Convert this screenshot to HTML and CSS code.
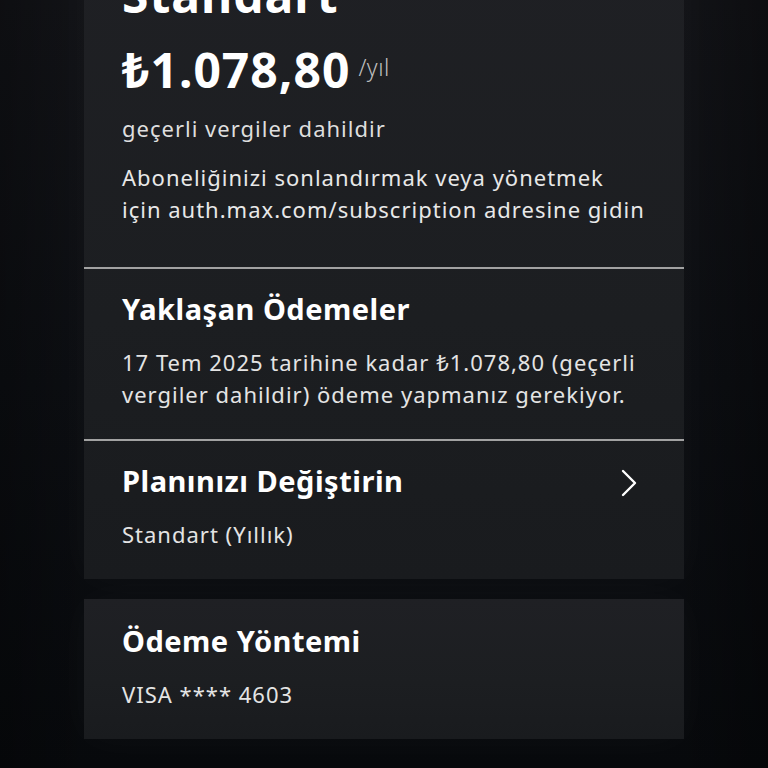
FILE: index.html
```html
<!DOCTYPE html>
<html lang="tr">
<head>
    <meta charset="UTF-8">
    <meta name="viewport" content="width=device-width, initial-scale=1.0">
    <title>Abonelik</title>
    <link rel="stylesheet" href="styles.css">
</head>
<body>
    <main class="page">
        <section class="card">
            <div class="card-section plan-summary">
                <h1 class="plan-name">Standart</h1>
                <div class="price">
                    <span class="price-amount">₺1.078,80</span>
                    <span class="price-period">/yıl</span>
                </div>
                <p class="tax-note">geçerli vergiler dahildir</p>
                <p class="manage-note">Aboneliğinizi sonlandırmak veya yönetmek<br>için auth.max.com/subscription adresine gidin</p>
            </div>
            <div class="card-section">
                <h2 class="section-title">Yaklaşan Ödemeler</h2>
                <p class="section-text">17 Tem 2025 tarihine kadar ₺1.078,80 (geçerli vergiler dahildir) ödeme yapmanız gerekiyor.</p>
            </div>
            <div class="card-section link-row">
                <div>
                    <h2 class="section-title">Planınızı Değiştirin</h2>
                    <p class="section-text">Standart (Yıllık)</p>
                </div>
                <svg class="chevron" width="18" height="28" viewBox="0 0 18 28" aria-hidden="true">
                    <path d="M3 2 L15 14 L3 26" fill="none" stroke="#fff" stroke-width="2.4" stroke-linecap="round" stroke-linejoin="round"/>
                </svg>
            </div>
        </section>

        <section class="card">
            <div class="card-section">
                <h2 class="section-title">Ödeme Yöntemi</h2>
                <p class="section-text">VISA **** 4603</p>
            </div>
        </section>
    </main>
</body>
</html>
```

FILE: styles.css
```css
html, body {
    margin: 0;
    height: 100%;
    overflow: hidden;
}
body {
    font-family: "Noto Sans", "Open Sans", sans-serif;
    color: #fff;
    background:
        linear-gradient(90deg, rgba(0, 0, 0, 0.25) 0%, rgba(0, 0, 0, 0) 12%, rgba(0, 0, 0, 0) 88%, rgba(0, 0, 0, 0.3) 100%),
        linear-gradient(180deg, #121317 0%, #0c0e12 50%, #07090c 100%);
}
.page {
    width: 600px;
    margin: -70px auto 0;
    display: flex;
    flex-direction: column;
    gap: 20px;
}
.card {
    background: linear-gradient(180deg, #1f2024 0%, #1c1e21 60%, #191b1e 100%);
    box-shadow: 0 0 40px rgba(255, 255, 255, 0.03);
}
.card-section {
    padding: 24px 38px 29px;
}
.card-section + .card-section {
    border-top: 2px solid #a2a2a2;
    padding-top: 22px;
}
.plan-summary {
    padding-top: 37px;
    padding-bottom: 42px;
}
.plan-name {
    margin: 0;
    font-size: 48px;
    line-height: 56px;
    font-weight: 700;
    letter-spacing: 1px;
}
.price {
    margin-top: 19px;
    display: flex;
    align-items: flex-start;
    gap: 8px;
}
.price-amount {
    font-size: 48px;
    line-height: 56px;
    font-weight: 700;
    letter-spacing: 1px;
}
.price-period {
    font-size: 23px;
    line-height: 28px;
    font-weight: 300;
    letter-spacing: 0.5px;
    color: #bdbdbd;
    margin-top: 11px;
}
.tax-note,
.manage-note,
.section-text {
    font-size: 22px;
    line-height: 32px;
    letter-spacing: 1px;
}
.tax-note {
    margin: 14px 0 0;
    color: #dedede;
}
.manage-note {
    margin: 17px 0 0;
    color: #e8e8e8;
}
.section-title {
    margin: 0;
    font-size: 29px;
    line-height: 36px;
    font-weight: 700;
    letter-spacing: 0.5px;
}
.section-text {
    margin: 19px 0 0;
    color: #e4e4e4;
}
.link-row {
    display: flex;
    justify-content: space-between;
    align-items: flex-start;
    padding-top: 23px;
    padding-right: 46px;
}
.chevron {
    margin-top: 6px;
}
```
